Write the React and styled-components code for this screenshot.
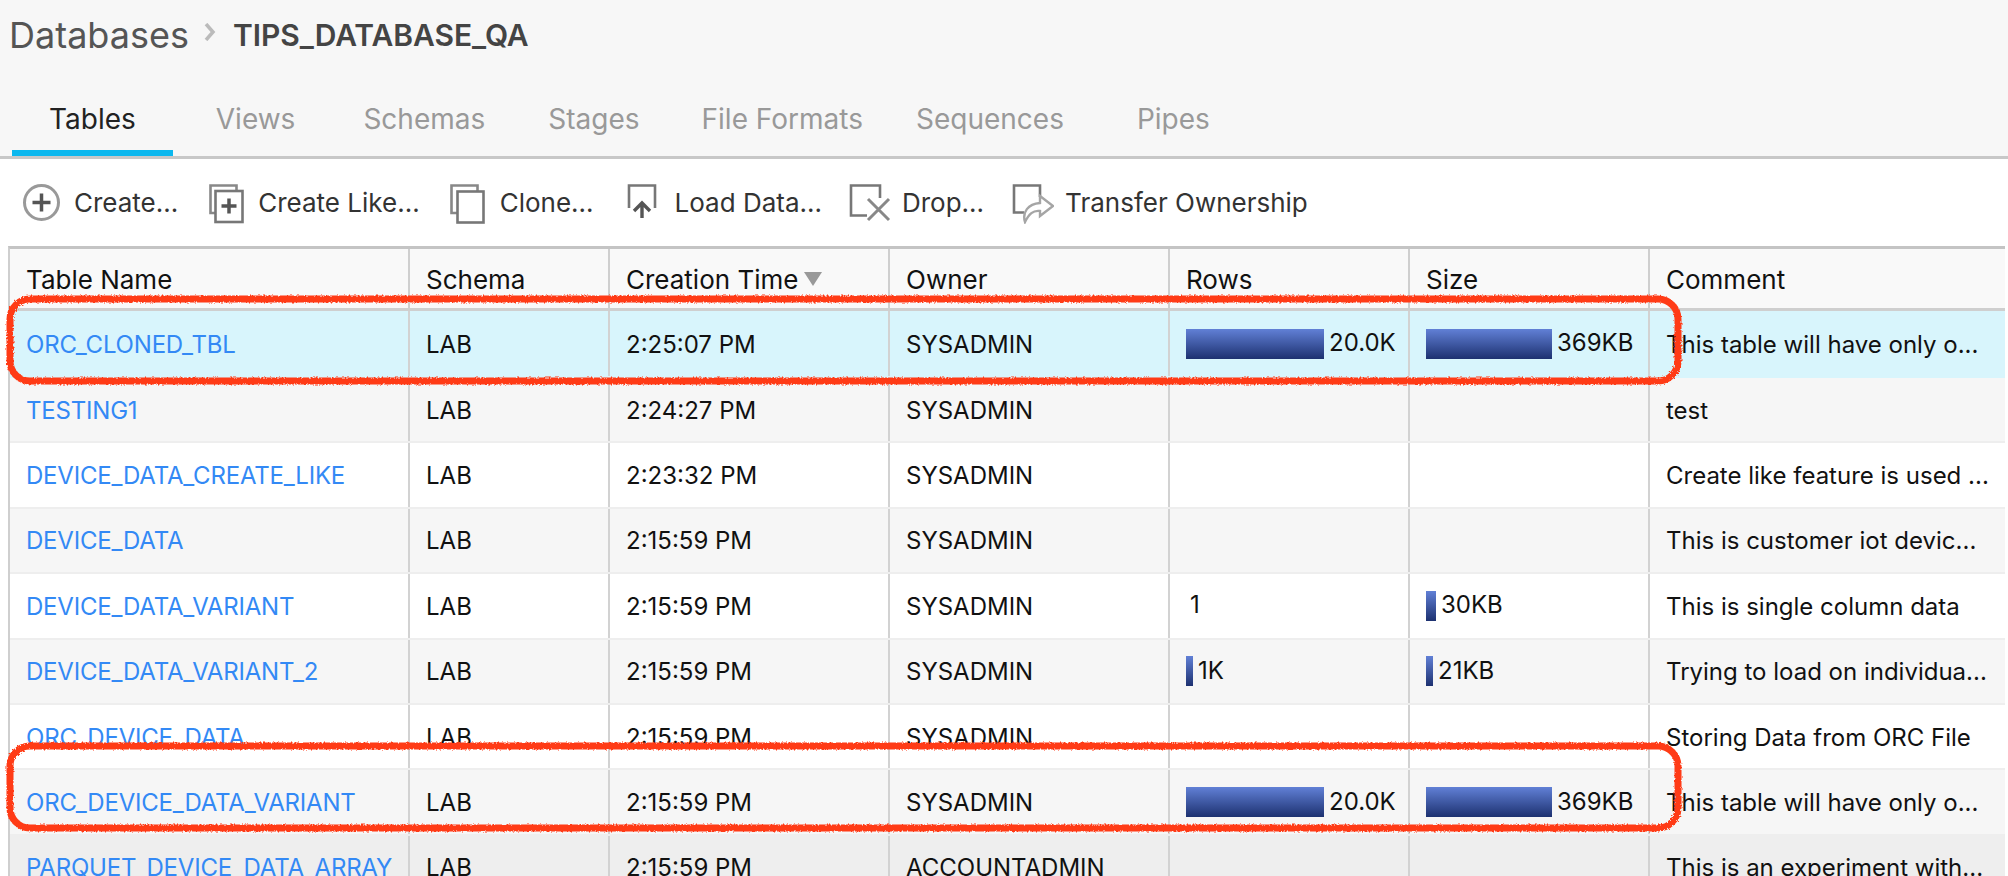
import React from "react";
import styled, { createGlobalStyle } from "styled-components";

const Global = createGlobalStyle`
  html, body { margin: 0; padding: 0; background: #fff; }
  body { width: 2008px; height: 876px; overflow: hidden; font-family: Inter, "Liberation Sans", sans-serif; }
`;

const Page = styled.div`
  position: relative;
  width: 2008px;
  height: 876px;
  overflow: hidden;
  background: #fff;
`;
const Head = styled.header`
  height: 156px;
  background: #f7f7f7;
  border-bottom: 3px solid #c8c8c8;
  display: flex;
  flex-direction: column;
`;
const Crumbs = styled.div`
  display: flex;
  align-items: center;
  height: 70px;
  padding-left: 9px;
`;
const CrumbRoot = styled.span`
  font-size: 36px;
  color: #555;
`;
const CrumbCurrent = styled.span`
  font-size: 30px;
  font-weight: 600;
  color: #444;
  margin-left: 17px;
  letter-spacing: -0.05px;
`;
const Chevron = styled.svg`
  width: 12px;
  height: 18px;
  margin-left: 15px;
  margin-top: -6px;
`;
const Tabs = styled.nav`
  display: flex;
  padding-left: 12px;
  flex: 1;
`;
const Tab = styled.div`
  font-size: 28px;
  height: 86px;
  line-height: 98px;
  box-sizing: border-box;
  margin-left: ${(p) => p.$ml}px;
  color: ${(p) => (p.$active ? "#222" : "#999")};
  padding: 0 ${(p) => (p.$active ? 37 : 0)}px;
  border-bottom: 6px solid ${(p) => (p.$active ? "#0cb8ef" : "transparent")};
`;
const Toolbar = styled.div`
  height: 87px;
  display: flex;
  align-items: center;
  padding-left: 23px;
  box-sizing: border-box;
`;
const Tool = styled.div`
  display: flex;
  align-items: center;
  margin-right: ${(p) => p.$mr}px;
`;
const ToolIcon = styled.svg`
  width: ${(p) => p.$w}px;
  height: 42px;
  fill: none;
  stroke: #777;
  stroke-width: 2.6;
  flex: none;
`;
const ToolLabel = styled.span`
  font-size: 26px;
  color: #333;
  margin-left: ${(p) => p.$ml}px;
  white-space: nowrap;
`;
const Table = styled.div`
  margin-left: 8px;
  width: 1997px;
  border-top: 3px solid #c4c4c4;
  border-left: 2px solid #cfcfcf;
  box-sizing: border-box;
`;
const columns = "400px 200px 280px 280px 240px 240px 1fr";
const HeaderRow = styled.div`
  display: grid;
  grid-template-columns: ${columns};
  height: 62px;
  background: #f9f9f9;
  border-bottom: 3px solid #cfcfcf;
  box-sizing: border-box;
`;
const HeaderCell = styled.div`
  display: flex;
  align-items: center;
  padding: 2px 0 0 16px;
  font-size: 26px;
  color: #111;
  white-space: nowrap;
  border-right: ${(p) => (p.$last ? "0" : "2px solid #cfcfcf")};
`;
const SortMark = styled.svg`
  width: 18px;
  height: 14px;
  margin-left: 6px;
  margin-top: -2px;
`;
const tones = { hi: "#d8f5fc", white: "#fff", grey: "#f6f6f6", dark: "#eeeeee" };
const Row = styled.div`
  display: grid;
  grid-template-columns: ${columns};
  height: ${(p) => (p.$first ? 67 : 65.4)}px;
  box-sizing: border-box;
  background: ${(p) => tones[p.$tone]};
  border-bottom: 2px solid ${(p) => (p.$tone === "hi" ? "#d8f5fc" : "#eeeeee")};
`;
const Cell = styled.div`
  display: flex;
  align-items: center;
  padding: 1px 0 0 16px;
  font-size: 24px;
  color: #111;
  white-space: nowrap;
  overflow: hidden;
  border-right: ${(p) => (p.$last ? "0" : "2px solid #d2d2d2")};
`;
const NameLink = styled.span`
  color: #3389f5;
  letter-spacing: -0.2px;
`;
const Bar = styled.span`
  display: block;
  height: 30px;
  flex: none;
  margin-top: -1px;
  background: linear-gradient(#6180d6, #1d3170);
`;
const BarText = styled.span`
  margin-left: 5px;
  margin-top: -3px;
`;
const Plain = styled.span`
  margin-left: 4px;
  margin-top: -3px;
`;
const Marks = styled.svg`
  position: absolute;
  left: 0;
  top: 0;
  pointer-events: none;
`;

const IconCreate = () => (
  <ToolIcon $w={38} viewBox="0 0 38 42">
    <circle cx="18.500" cy="20.500" r="17" stroke="#999" strokeWidth="3" />
    <path d="M18.500 11.500v18M9.500 20.500h18" stroke="#555" strokeWidth="3.500" />
  </ToolIcon>
);
const IconLike = () => (
  <ToolIcon $w={36} viewBox="0 0 36 42">
    <path d="M6 31H1.500V3.500h26V9" stroke="#888" />
    <rect x="6.500" y="9" width="27" height="31" />
    <path d="M20 16.500v15M12.500 24h15" stroke="#555" strokeWidth="3.500" />
  </ToolIcon>
);
const IconClone = () => (
  <ToolIcon $w={36} viewBox="0 0 36 42">
    <path d="M7 31H1.500V3.500h26V9" stroke="#888" />
    <rect x="7.500" y="9.500" width="26" height="31" />
  </ToolIcon>
);
const IconLoad = () => (
  <ToolIcon $w={30} viewBox="0 0 30 42">
    <path d="M2 26V3.500h26V26" />
    <path d="M15 36V21M7 29l8-8 8 8" stroke="#555" strokeWidth="3.400" />
  </ToolIcon>
);
const IconDrop = () => (
  <ToolIcon $w={42} viewBox="0 0 42 42">
    <path d="M31 16V3.500H2v30h16" />
    <path d="M19 17l21 21M40 17L19 38" stroke="#888" strokeWidth="3" />
  </ToolIcon>
);
const IconTransfer = () => (
  <ToolIcon $w={42} viewBox="0 0 42 42">
    <path d="M28 15V3.500H2v27h10" />
    <path d="M13 40c-3-10 3-18 15-19v-7l13 10-13 10v-5c-7-1-11 3-15 11z" stroke="#a5a5a5" strokeWidth="2.400" />
  </ToolIcon>
);

const rows = [
  ["ORC_CLONED_TBL", "LAB", "2:25:07 PM", "SYSADMIN", ["20.0K", 138], ["369KB", 126], "This table will have only o...", "hi"],
  ["TESTING1", "LAB", "2:24:27 PM", "SYSADMIN", null, null, "test", "grey"],
  ["DEVICE_DATA_CREATE_LIKE", "LAB", "2:23:32 PM", "SYSADMIN", null, null, "Create like feature is used ...", "white"],
  ["DEVICE_DATA", "LAB", "2:15:59 PM", "SYSADMIN", null, null, "This is customer iot devic...", "grey"],
  ["DEVICE_DATA_VARIANT", "LAB", "2:15:59 PM", "SYSADMIN", ["1", 0], ["30KB", 10], "This is single column data", "white"],
  ["DEVICE_DATA_VARIANT_2", "LAB", "2:15:59 PM", "SYSADMIN", ["1K", 7], ["21KB", 7], "Trying to load on individua...", "grey"],
  ["ORC_DEVICE_DATA", "LAB", "2:15:59 PM", "SYSADMIN", null, null, "Storing Data from ORC File", "white"],
  ["ORC_DEVICE_DATA_VARIANT", "LAB", "2:15:59 PM", "SYSADMIN", ["20.0K", 138], ["369KB", 126], "This table will have only o...", "grey"],
  ["PARQUET_DEVICE_DATA_ARRAY", "LAB", "2:15:59 PM", "ACCOUNTADMIN", null, null, "This is an experiment with...", "dark"],
];

const Metric = ({ data }) => {
  if (!data) return <Cell />;
  const [text, width] = data;
  return (
    <Cell>
      {width > 0 ? (
        <>
          <Bar style={{ width }} />
          <BarText>{text}</BarText>
        </>
      ) : (
        <Plain>{text}</Plain>
      )}
    </Cell>
  );
};

const tabs = [
  ["Tables", 0, true],
  ["Views", 43],
  ["Schemas", 68],
  ["Stages", 63],
  ["File Formats", 62],
  ["Sequences", 53],
  ["Pipes", 73],
];

export default function App() {
  return (
    <Page>
      <Global />
      <Head>
        <Crumbs>
          <CrumbRoot>Databases</CrumbRoot>
          <Chevron viewBox="0 0 12 18">
            <path d="M2 1l7 8-7 8" fill="none" stroke="#bbb" strokeWidth="3.500" />
          </Chevron>
          <CrumbCurrent>TIPS_DATABASE_QA</CrumbCurrent>
        </Crumbs>
        <Tabs>
          {tabs.map(([t, ml, active]) => (
            <Tab key={t} $ml={ml} $active={active}>
              {t}
            </Tab>
          ))}
        </Tabs>
      </Head>
      <Toolbar>
        <Tool $mr={31}>
          <IconCreate />
          <ToolLabel $ml={13}>Create...</ToolLabel>
        </Tool>
        <Tool $mr={30}>
          <IconLike />
          <ToolLabel $ml={13}>Create Like...</ToolLabel>
        </Tool>
        <Tool $mr={33}>
          <IconClone />
          <ToolLabel $ml={14}>Clone...</ToolLabel>
        </Tool>
        <Tool $mr={27}>
          <IconLoad />
          <ToolLabel $ml={18}>Load Data...</ToolLabel>
        </Tool>
        <Tool $mr={28}>
          <IconDrop />
          <ToolLabel $ml={11}>Drop...</ToolLabel>
        </Tool>
        <Tool $mr={0}>
          <IconTransfer />
          <ToolLabel $ml={11}>Transfer Ownership</ToolLabel>
        </Tool>
      </Toolbar>
      <Table>
        <HeaderRow>
          <HeaderCell>Table Name</HeaderCell>
          <HeaderCell>Schema</HeaderCell>
          <HeaderCell>
            Creation Time
            <SortMark viewBox="0 0 18 14">
              <path d="M0 0h18L9 14z" fill="#999" />
            </SortMark>
          </HeaderCell>
          <HeaderCell>Owner</HeaderCell>
          <HeaderCell>Rows</HeaderCell>
          <HeaderCell>Size</HeaderCell>
          <HeaderCell $last>Comment</HeaderCell>
        </HeaderRow>
        {rows.map((r, i) => (
          <Row key={r[0]} $tone={r[7]} $first={i === 0}>
            <Cell>
              <NameLink>{r[0]}</NameLink>
            </Cell>
            <Cell>{r[1]}</Cell>
            <Cell>{r[2]}</Cell>
            <Cell>{r[3]}</Cell>
            <Metric data={r[4]} />
            <Metric data={r[5]} />
            <Cell $last>{r[6]}</Cell>
          </Row>
        ))}
      </Table>
      <Marks width="2008" height="876" viewBox="0 0 2008 876">
        <defs>
          <filter id="rough" x="-2%" y="-10%" width="104%" height="120%">
            <feTurbulence type="fractalNoise" baseFrequency="0.55" numOctaves="2" seed="4" />
            <feDisplacementMap in="SourceGraphic" scale="3.500" />
          </filter>
        </defs>
        <g fill="none" stroke="#ff3b14" strokeWidth="7" filter="url(#rough)">
          <rect x="10" y="299" width="1668" height="82" rx="20" />
          <rect x="10" y="746" width="1668" height="82" rx="20" />
        </g>
      </Marks>
    </Page>
  );
}
